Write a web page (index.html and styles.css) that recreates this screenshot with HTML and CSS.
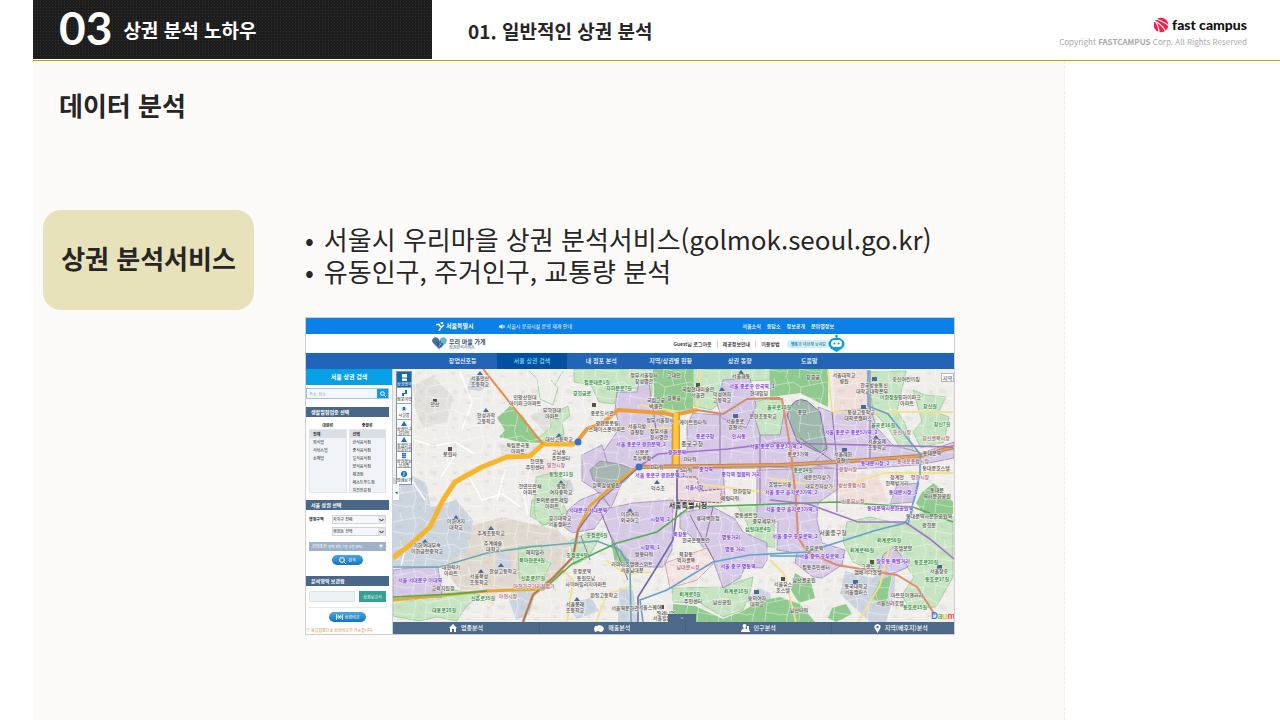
FILE: index.html
```html
<!DOCTYPE html>
<html lang="ko">
<head>
  <meta charset="UTF-8" />
  <meta name="viewport" content="width=device-width, initial-scale=1.0"/>
  <title>상권 분석 노하우 - 데이터 분석</title>
  <link rel="stylesheet" href="styles.css">
</head>
<body>
  <header class="header">
    <div class="chapter">
      <span class="chapter-num">03</span>
      <span class="chapter-name">상권 분석 노하우</span>
    </div>
    <h1>01. 일반적인 상권 분석</h1>
    <div class="brand">
      <div class="logo">
        <svg width="16" height="16" viewBox="0 0 16 16">
          <circle cx="8" cy="8" r="7.300" fill="#f4214b"/>
          <path d="M1 2 Q9 3 16 9 M1 4 Q9 7 13 15 M2 4 Q6 9 6 16" stroke="#fff" stroke-width="1.200" fill="none"/>
        </svg>
        <span>fast campus</span>
      </div>
      <p>Copyright <b>FASTCAMPUS</b> Corp. All Rights Reserved</p>
    </div>
  </header>

  <main class="slide">
    <h2>데이터 분석</h2>
    <div class="content">
      <div class="topic">상권 분석서비스</div>
      <div class="detail">
        <ul class="points">
          <li>서울시 우리마을 상권 분석서비스(golmok.seoul.go.kr)</li>
          <li>유동인구, 주거인구, 교통량 분석</li>
        </ul>

        <div class="site">
          <!-- Top bar -->
          <div class="site-top">
            <div class="city">
              <svg width="9" height="9" viewBox="0 0 9 9" fill="none" stroke="#fff" stroke-width="1.5"><path d="M0 3 Q3 1 4 4 Q5 6 8 3 M3 9 Q4 6 7 4"/><circle cx="6" cy="1" r=".6"/></svg>
              서울특별시
            </div>
            <div class="notice">
              <svg width="6" height="5" viewBox="0 0 6 5" fill="#fff"><path d="M0 1.5h1.5L3.5 0v5L1.5 3.5H0z"/><path d="M4.5 1v3M5.6 1v3" stroke="#fff" stroke-width=".5"/></svg>
              서울시 문화시설 운영 재개 안내
            </div>
            <nav class="top-links">
              <a href="#">서울소식</a><a href="#">응답소</a><a href="#">정보공개</a><a href="#">분야별정보</a>
            </nav>
          </div>

          <!-- Logo row -->
          <div class="site-head">
            <div class="shop-logo">
              <svg width="15" height="13" viewBox="0 0 15 13">
                <path d="M7.500 12.500 L1 6 Q-1 3 1.500 1 Q5-1 7.500 3z" fill="#47719f"/>
                <path d="M7.500 12.500 L14 6 Q16 3 13.500 1 Q10-1 7.500 3z" fill="#6bb6cf"/>
                <path d="M4 5l6 5M6 4l5 4M5 9l4-5M7 11l4-5" stroke="#24446f" stroke-width=".8"/>
              </svg>
              <div><strong>우리 마을 가게</strong><small>상권분석서비스</small></div>
            </div>
            <nav class="head-links">
              <a href="#">Guest님 로그아웃</a><a href="#">제공정보안내</a><a href="#">이용방법</a>
            </nav>
            <div class="chatbot">
              <span><b>챗봇</b>과 대화해 보세요</span>
              <svg width="17" height="19" viewBox="0 0 17 19">
                <path d="M8.500 1v4" stroke="#0aa0d4"/><circle cx="8.500" cy="2" r="1.300" fill="#0aa0d4"/>
                <path d="M5 16h7l-3.500 2z" fill="#0aa0d4"/>
                <ellipse cx="8.500" cy="10" rx="8" ry="6.500" fill="#0aa0d4"/>
                <rect x="3" y="6" width="11" height="7" rx="3.500" fill="#fff"/>
                <circle cx="6.500" cy="9.500" r="1" fill="#0aa0d4"/><circle cx="10.500" cy="9.500" r="1" fill="#0aa0d4"/>
              </svg>
            </div>
          </div>

          <nav class="site-nav">
            <a href="#">창업신호등</a>
            <a href="#" class="active">서울 상권 검색</a>
            <a href="#">내 점포 분석</a>
            <a href="#">지역/상권별 현황</a>
            <a href="#">상권 동향</a>
            <a href="#">도움말</a>
          </nav>

          <div class="site-body">
            <!-- Search panel -->
            <aside class="panel">
              <h3 class="panel-title">서울 상권 검색</h3>
              <div class="search">
                <input type="text" aria-label="주소, 장소" placeholder="주소, 장소">
                <button aria-label="검색"><svg width="6" height="6" viewBox="0 0 6 6" fill="none" stroke="#fff"><circle cx="2.500" cy="2.500" r="1.800"/><path d="M4 4l2 2"/></svg></button>
              </div>

              <h4>생활밀접업종 선택</h4>
              <div class="types">
                <div>
                  <b>대분류</b>
                  <ul><li class="on">전체</li><li>외식업</li><li>서비스업</li><li>소매업</li></ul>
                </div>
                <div>
                  <b>중분류</b>
                  <ul><li class="on">선택</li><li>한식음식점</li><li>중식음식점</li><li>일식음식점</li><li>양식음식점</li><li>제과점</li><li>패스트푸드점</li><li>치킨전문점</li></ul>
                </div>
              </div>

              <h4>서울 상권 선택</h4>
              <div class="area">
                <label for="gu">행정구역</label>
                <div class="drop"><select id="gu"><option>자치구 전체</option></select><svg width="7" height="8" viewBox="0 0 7 8"><path d="M1.500 3l2 2 2-2" fill="none" stroke="#222"/></svg></div>
                <div class="drop"><select id="dong" aria-label="행정동"><option>행정동 선택</option></select><svg width="7" height="8" viewBox="0 0 7 8"><path d="M1.500 3l2 2 2-2" fill="none" stroke="#222"/></svg></div>
              </div>
              <button class="option"><span>선택조건 <small>(선택 영역, 기준 상권 30%)</small></span><span>▼</span></button>
              <button class="pill find"><svg width="7" height="7" viewBox="0 0 7 7" fill="none" stroke="#fff"><circle cx="3" cy="3" r="2.400"/><path d="M5 5l2 2"/></svg>검색</button>

              <h4>분석영역 보관함</h4>
              <div class="saved">
                <input type="text" aria-label="보관함">
                <button>상권보고서</button>
              </div>
              <button class="pill compare"><svg width="7" height="6" viewBox="0 0 7 6" fill="none" stroke="#fff" stroke-width=".8"><path d="M.5 0v6M6.500 0v6M2 1l3 4M5 1l-3 4M1 3h5"/></svg>상권비교</button>
              <p class="note">※ 동일업종으로 상권비교가 가능합니다.</p>
            </aside>

            <div class="map-col">
              <div class="map">
                <svg class="map-svg" viewBox="393 369 561 253" preserveAspectRatio="xMidYMid slice">
                  <defs>
                    <pattern id="streets" width="34" height="27" patternUnits="userSpaceOnUse">
                      <path d="M0 6l11-2 8 5 15-3M5 0l3 11-4 16M19 9l-2 18M17 18l17 3M26 0l2 8M0 20l6 1" fill="none" stroke="#fff" stroke-width="1" opacity=".4"/>
                      <path d="M11 12h4v4h-4zM22 11l7 1-1 4-6-1zM9 21h4v3H9zM24 24h5v2h-5z" fill="#b9b4a9" opacity=".16"/>
                    </pattern>
                  </defs>
                  <path fill="#efeeea" d="M393 369h561v253H393z"/>

                  <!-- Built-up and campus ground -->
                  <g fill="#e2e0dd">
                    <path d="M413 385l20-9 20 21-6 25-24 6-8-20z"/>
                    <path d="M500 445l42 2-12 10-28 4zM530 416l17-10 15 10-4 14-10 6z"/>
                  </g>
                  <path fill="#e0d9cf" d="M467 527l36-10 54 13 14 12-8 28-20 19-83 1-18-24z"/>
                  <g fill="#ccd5df">
                    <path d="M393 475l18 0 15 8 5 24 25-7 17 20-5 30-26 16-49 1z"/>
                    <path d="M497 553l14 3v18l-15-2zM513 587l22 5-5 22-14 6-7-20zM470 378l11-4 8 10-9 7-13-2z"/>
                    <path d="M547 432l14-2 6 10-18 3zM546 487l24-8 4 12-14 12zM566 605l25-8 8 14-22 8z"/>
                    <path d="M866 383l22-3v30l-23-3zM845 571l28 7 23-18-2 36-8 26-16 0-30-28zM727 387l13-4v14l-13 2z"/>
                    <path d="M619 588l14 2 5 32h-20zM746 600l12-12 12 5 2 15-15 3z"/>
                  </g>
                  <path fill="#efdeda" d="M833 369h35v40l-34 2zM838 472l40 3 10 27-48 1zM541 458l18 4-3 15-18-3zM480 585l18 4-4 17-15-10z"/>
                  <path d="M395 590l10-40M415 440l18 6 22-4 20 12M455 455l-14 22M460 372l12 30-10 28M425 500l-12-18-20-6M470 478l12 22 20-6 20 14M505 470l-8 30M520 480l8 35" fill="none" stroke="#fff" stroke-width="1.500"/>

                  <!-- Neighbourhood parks -->
                  <g fill="#c7e5c3" stroke="#84bc83" stroke-width=".6">
                    <path d="M574 369h78v27l-17-8-17 2-4 14-15-2-8-17-17-3zM693 369h77v11l-46 2 5 14-18 14-17-4z"/>
                    <path d="M550 415l18-9 2 10-8 6 2 12-19 8-8-3 14-12z"/>
                    <path d="M529 371l8 8 3 20 13 6 5-17-7-8M563 371l-8 14" fill="none"/>
                    <path d="M753 402l24-5 17 20 2 25-25 6-14-8z"/>
                    <path d="M868 372l38-1-5 23-4 17 8 12 10 34-12-5-15-24-15-17z"/>
                    <path d="M913 390l12 5 21 2-8 16 11 4-5 25-23 6-8-16 9-11z"/>
                    <path d="M536 477l20-5 12 12-8 12 7 16-25 14-8-13zM518 547l24-2v14l9 4-7 14-25 1zM532 500l24 2 7 15-18 8-15-9z"/>
                    <path d="M393 598l20 3 18-11 24 0 25 5-14 12-9 14-20-4-18 4-26-5zM570 541l16-8 17-1-15 26-14 7z"/>
                    <path d="M672 588l51-1 30-10-3 16-7 17-20 7-23-14-27-1z"/>
                    <path d="M737 505l36 1 2 42-23-5-5-20zM847 522l23-5 35 8 15-12 33 4v60l-17 30-27 2-7-14 12-18-17-25-6 14-20 4-18-8-10-20z"/>
                    <path d="M786 470l24-7 5 24-10 12-18-8z"/>
                  </g>

                  <!-- Hills and palaces -->
                  <g fill="#8fca8e">
                    <path d="M510 406l-13 12 8 12-6 7 21 5 22 1-20-28z"/>
                    <path d="M653 369h40v41l-35 2-4-12zM770 369h58v38l-28-14-30 4zM611 541l12 8 10 19-18-5z"/>
                    <path d="M673 604l22 2 28 13 20-8 16-10 21-4 20 7 15 18H673zM795 573l16 9 4 16-16 5-8-13zM880 580l12-5-6 30-15-7zM832 608l14-4 6 10-16 8-8-4z"/>
                    <path d="M922 492l12-9 19 19v12l-28 1-9-12zM913 450l12 4-4 8-12-4z"/>
                  </g>

                  <!-- Selected trade areas -->
                  <g fill="#d3c5e6" fill-opacity=".88" stroke="#957fb4" stroke-width=".7">
                    <path d="M617 392l20 0 2-10 10 0 4 30 19 8v45h-34l-15 10-28-12 15-21 10-15-5-17z"/>
                    <path d="M687 425l6-12 27 2 30-13 10 33h20l5-27h7l11 30 14 7 10 2v20l-147 2-2-15 9-1z"/>
                    <path d="M723 380l27-2 6 28-10 22-24-10-5-14z"/>
                    <path d="M818 407l14 5 38-4 7 20 16 17 29 8 32-11v16l-35 7-82 5-25-6 15-14z"/>
                    <path d="M600 510l33-7 40-3-1 50-9 17h-26l-17-14-12-23zM678 468h45l2 32-48 2z"/>
                    <path d="M680 513l33-6 22 12 8 13 24 11 0 17-5 8-17-1-5 11-17 10-10-28-13-17-20-15z"/>
                    <path d="M757 470l80-2 1 21-20 14-1 17 5 23 23 7-3 15-20 13-9-1-18-14 2-10-20-3 1-28-21-5z"/>
                    <path d="M893 547l7 7 8 13-18 8-12-3 5-17zM897 485l22-2-5 19-24 2z"/>
                    <path d="M393 570l17-2 28-1 4 30-49 2zM568 510l12-10 20-8 10 15-16 22-22 4-10-8zM582 455l20-10 5 17 16 18-12 28-15-18-14-9z"/>
                  </g>
                  <path d="M665 563l42-15 8 14-18 18-27 8z" fill="#f6e4e3" stroke="#c48c98" stroke-width=".7"/>
                  <path d="M787 415q6-20 20-14l13 11 7 36-7 5-23-12z" fill="#9fb9ad" stroke="#83709d" stroke-width="1"/>
                  <path d="M590 470l10-9 19 3 17 6-12 12-13 5-18-7z" fill="#a6b6b0" stroke="#83709d" stroke-width=".6"/>
                  <path d="M677 477l20 0 2 14 22-2v14l-44-3z" fill="#e9dbe0" stroke="#a8503c" stroke-dasharray="3 1"/>
                  <path fill="url(#streets)" d="M393 369h561v253H393z"/>

                  <!-- Small roads -->
                  <g fill="none" stroke="#f4e092" stroke-width="1.800">
                    <path d="M596 622l11-28 26-8M606 560l20 14 25-2M563 570l10 10-6 42M770 560l14 14 12 48M640 405l40 7M674 428h-62M697 410l4-40M828 370l4 42 121 0M770 479l65 9 50-15h68M890 545l-10 40-22 37M700 484l70 9"/>
                  </g>
                  <g fill="none" stroke="#8e719f" stroke-width="1">
                    <path d="M720 415v50M760 435v70M832 412l5 50 0 50M870 370v94M590 560l-9-24M713 507l-8 34M600 510l28 70M690 515l25 47M800 438l37 26M652 400l4 30"/>
                  </g>

                  <!-- Main roads -->
                  <g fill="none" stroke-linejoin="round">
                    <path d="M575 444L587 429 603 423 618 410 663 413 673 415 697 410" stroke="#ee9d3c" stroke-width="4"/>
                    <path d="M697 410L723 414 747 399 780 398" stroke="#cf8b66" stroke-width="2"/>
                    <path d="M393 558l17-13 20-18 13-27 12-18 27-15 25-10 23-1 13-12h32" stroke="#f7b52b" stroke-width="5"/>
                    <path d="M676 413v55" stroke="#e49a1d" stroke-width="8"/><path d="M676 413v55" stroke="#ffc947" stroke-width="5"/>
                    <path d="M638 467l142-2 57-3 83-6 34-9" stroke="#ba8060" stroke-width="4"/><path d="M638 467l142-2 57-3 83-6 34-9" stroke="#e2a75d" stroke-width="2"/>
                    <path d="M638 467l-28 21-20 18-12 24-5 27-20 21-20 17-10 27M393 600l94-9 56-2 20-19" stroke="#e5a82c" stroke-width="3"/>
                    <path d="M523 622l10-27 20-17 20-21 5-27 22-30 38-32" stroke="#9673a6" stroke-width="1.500"/>
                    <path d="M483 369l39 49 21 26" stroke="#ee8a43" stroke-width="2"/>
                    <path d="M770 399l12 0 9 53 5 48 2 37 9 15 30 13 60 10 20 12 18 28" stroke="#e28a69" stroke-width="2"/>
                  </g>

                  <!-- Subway lines -->
                  <g fill="none" stroke-width="1.600">
                    <path d="M393 567h47l47-14 43-6 67-6 23 9 10 17 1 55" stroke="#67a7ba"/>
                    <path d="M643 622l-3-22 27-10 46-28 37-7 57-3 70-22 28-7 8-13M770 556h37M868 370v36l20 8 32 40v20l-12 50" stroke="#62a2cf"/>
                    <path d="M677 470v37l-4 33-15 25-20 32v25" stroke="#7466a6"/>
                    <path d="M543 590l29-26 45-21 40-11 33-25 147-5 76 5 40 15" stroke="#53ad55"/>
                    <path d="M638 467l20-13 70-5 47-6 178 4M770 500l38 4 50 18 47 0 25 17 24 20" stroke="#a472cb"/>
                    <path d="M393 597l60-3 34-3" stroke="#4cab54"/>
                  </g>
                  <g fill="#3872ca"><circle cx="578" cy="442" r="3.500"/><circle cx="639" cy="467" r="3.500"/></g>

                  <!-- Place pins -->
                  <g fill="#486b92">
                    <path d="M480 371l3 4h-6zM486 408l3 4h-6zM559 433l3 4h-6zM561 480l3 4h-6zM491 526l3 4h-6zM501 563l3 4h-6zM481 569l3 4h-6zM456 515l3 4h-6zM425 539l3 4h-6zM577 597l3 4h-6zM657 480l3 4h-6zM741 370l3 4h-6zM722 387l3 4h-6zM876 435l3 4h-6zM630 508l3 4h-6z"/>
                    <path d="M872 377h5v4h-5zM861 405h5v4h-5zM754 590h5v4h-5zM853 580h5v4h-5zM733 414h5v4h-5zM842 448h5v4h-5zM937 565h5v4h-5z"/>
                  </g>
                  <g fill="#554">
                    <path d="M433 399h4v3h-4zM448 447h4v4h-4zM592 403h4v4h-4zM696 383h4v4h-4zM781 577h4v4h-4zM870 560h4v4h-4zM660 605h4v4h-4z"/>
                  </g>

                  <g class="place">
                    <text x="480" y="380">서울안산</text><text x="480" y="386">초등학교</text><text x="435" y="406">안산</text><text x="486" y="417">한성과학</text><text x="486" y="423">고등학교</text>
                    <text x="525" y="399">인왕산현대</text><text x="525" y="405">아이파크아파트</text><text x="552" y="412">무악현대</text><text x="552" y="418">아파트</text><text x="450" y="456">봉원사</text>
                    <text x="518" y="447">독립문극동</text><text x="518" y="453">아파트</text><text x="559" y="441">대신고등학교</text><text x="559" y="454">교남동</text><text x="561" y="460">주민센터</text><text x="537" y="463">천연동</text><text x="535" y="469">주민센터</text>
                    <text x="530" y="488">천연뜨란채</text><text x="530" y="494">아파트</text><text x="561" y="488">동명</text><text x="561" y="494">여자중학교</text><text x="456" y="523">이화여자</text><text x="456" y="529">대학교</text><text x="427" y="547">이화여대부속</text><text x="427" y="553">이화금란중학교</text>
                    <text x="491" y="535">추계초등학교</text><text x="493" y="545">추계예술</text><text x="493" y="551">대학교</text><text x="503" y="573">한성고등학교</text><text x="479" y="578">서울북성</text><text x="479" y="584">초등학교</text><text x="451" y="569">대현럭키</text><text x="451" y="575">아파트</text><text x="443" y="590">교육지원청</text><text x="552" y="502">돈의문센트레빌</text><text x="552" y="508">아파트</text><text x="560" y="520">경기대학교</text><text x="560" y="526">서울캠퍼스</text>
                    <text x="535" y="554">해피빌라</text><text x="582" y="573">충정로역</text><text x="586" y="580">동원모닝</text><text x="586" y="586">사이버빌리지아파트</text><text x="575" y="606">서울봉래</text><text x="575" y="612">초등학교</text><text x="604" y="597">환일고등학교</text>
                    <text x="644" y="377">정부서울청사</text><text x="644" y="383">창성별관</text><text x="674" y="377">고대안</text><text x="674" y="400">경복궁</text><text x="656" y="402">국립고궁</text><text x="656" y="408">박물관</text><text x="698" y="391">국립현대미술관</text><text x="698" y="397">서울관</text><text x="722" y="396">덕성여자</text><text x="722" y="402">고등학교</text><text x="741" y="378">서울재동</text><text x="759" y="395">현대빌딩</text>
                    <text x="602" y="415">종로도서관</text><text x="607" y="425">광화문풍림</text><text x="607" y="431">스페이스본아파트</text><text x="660" y="422">정부서울청사</text><text x="659" y="433">정부서울</text><text x="659" y="439">청사별관</text><text x="637" y="428">서울지방</text><text x="637" y="434">경찰청</text><text x="693" y="424">케이트윈타워</text><text x="735" y="423">서울종로</text><text x="735" y="429">경찰서</text><text x="763" y="418">운현초등학교</text>
                    <text x="642" y="454">신문로</text><text x="642" y="460">주상복합</text><text x="692" y="446" class="mid">종로구청</text><text x="690" y="461">D타워</text><text x="657" y="469">D타워</text><text x="686" y="472">S타워</text><text x="658" y="490">덕수초</text><text x="606" y="487">강북삼성병원</text><text x="742" y="493">한화빌딩</text><text x="730" y="500">페럼타워</text><text x="780" y="486">호텔뉴서울</text>
                    <text x="813" y="379">창경궁</text><text x="844" y="377">서울대학교</text><text x="844" y="383">병원</text><text x="874" y="387">한국방송통신</text><text x="872" y="393">대학교대학본부</text><text x="906" y="381">충신어린이집</text><text x="907" y="399">쇼핑하이파크</text><text x="907" y="405">아파트</text><text x="861" y="414">동성고등학교</text><text x="858" y="420">대학로캠퍼스</text><text x="802" y="414">종묘</text><text x="798" y="456">종로3가역</text><text x="843" y="456">서울혜화</text><text x="843" y="462">경찰서</text><text x="877" y="443">서울효제</text><text x="877" y="449">초등학교</text><text x="932" y="455">동대문역</text><text x="936" y="470">동대문호스텔</text><text x="817" y="479">세운전자상가</text><text x="819" y="488">대우전자상가</text><text x="897" y="479">청계천</text><text x="897" y="485">헌책방거리</text><text x="937" y="492">동대문</text><text x="937" y="498">역사문화공원</text><text x="929" y="527">광희문</text><text x="929" y="518">동대문역사문화공원역</text>
                    <text x="630" y="516">이화여자</text><text x="630" y="522">외국어고</text><text x="696" y="542">한국은행본관</text><text x="708" y="520">롯데백화점</text><text x="686" y="556">북창동</text><text x="686" y="562">먹자골목</text><text x="644" y="556">쌍용타워</text><text x="632" y="566">라마다호텔앤스위트</text><text x="632" y="572">서울남대문</text><text x="650" y="609">서울스퀘어</text><text x="666" y="615">밀레니엄</text><text x="662" y="620">서울힐튼</text><text x="625" y="610">서울역문화관</text><text x="693" y="603">주민센터</text><text x="722" y="604">남산공원</text><text x="757" y="600">숭의여자</text><text x="757" y="606">대학교</text><text x="746" y="517">명동센트럴</text><text x="764" y="523">중부세무서</text>
                    <text x="783" y="586">서울유스</text><text x="783" y="592">호스텔</text><text x="816" y="569">필동주민센터</text><text x="814" y="550">충무로역</text><text x="868" y="568">그랜드</text><text x="868" y="574">앰배서더호텔</text><text x="856" y="588">동국대학교</text><text x="856" y="594">서울캠퍼스</text><text x="903" y="550">호텔로얄</text><text x="907" y="597">아트모아갤러리</text><text x="890" y="605">서울신라호텔</text><text x="804" y="582">남산골공원</text><text x="799" y="612">남산타워</text><text x="939" y="573">서울장충</text><text x="833" y="535" class="mid">서울중구청</text>
                    <text x="688" y="508" class="big">서울특별시청</text>
                  </g>
                  <g class="place trade">
                    <text x="641" y="446">서울 종로구 광화문역_2</text><text x="660" y="477">서울 종로구 광화문역_1</text><text x="752" y="388">서울 종로구 안국역_1</text><text x="705" y="438">종로구청</text><text x="739" y="438">인사동</text><text x="776" y="448">서울 종로구 종로3가역_2</text><text x="677" y="454">광화문역</text><text x="706" y="471">종각역</text><text x="741" y="476">종각역 젊음의 거리</text><text x="694" y="489">서울시청</text><text x="851" y="434">서울 종로구 종로5가역_2</text><text x="875" y="465">동대문시장_2</text><text x="791" y="494">서울 중구 을지로3가역_2</text><text x="903" y="494">동대문시장_1</text>
                    <text x="588" y="512">서대문구 서대문역</text><text x="420" y="582">서울 서대문구 이대역</text><text x="660" y="521">시청역_2</text><text x="650" y="549">시청역_1</text><text x="680" y="536">북창동</text><text x="731" y="539">명동거리</text><text x="735" y="551">명동 거리</text><text x="738" y="568">서울 중구 명동역</text><text x="792" y="511">서울 중구 을지로3가역_1</text><text x="795" y="538">서울 중구 충무로역_2</text><text x="822" y="558">서울 중구 충무로역_1</text><text x="890" y="510">동대문역사문화공원역</text><text x="893" y="563">장충동 족발거리</text>
                  </g>
                  <g class="place road">
                    <text x="619" y="390">자하문로7길</text><text x="597" y="384">필운대로1길</text><text x="582" y="395">경희궁로</text><text x="779" y="409">율곡로10길</text><text x="889" y="399" class="short">이화장길</text><text x="883" y="427">율곡로16길</text><text x="930" y="408">창신길</text><text x="942" y="426">창신7길</text><text x="803" y="472">종로24길</text><text x="561" y="476">통일로11길</text><text x="532" y="562">북아현로4길</text><text x="533" y="580">신촌로37길</text><text x="577" y="557">충정로4길</text><text x="597" y="537">충정로6길</text><text x="483" y="600">신촌로35길</text><text x="444" y="612">대흥로28길</text><text x="690" y="596">퇴계로8길</text><text x="736" y="593">퇴계로18길</text><text x="889" y="542">퇴계로56길</text><text x="862" y="552">퇴계로46길</text><text x="926" y="564">동호로20길</text><text x="937" y="581">동호로17길</text><text x="915" y="609">동호로15길</text><text x="758" y="531">삼일대로4길</text>
                  </g>
                  <g class="place pinkish">
                    <text x="556" y="467">영천시장</text><text x="534" y="588">아현가구거리상점가</text><text x="508" y="598">아현시장</text><text x="688" y="569">남대문시장</text><text x="902" y="434">충신시장</text><text x="936" y="440">창신골목시장</text><text x="848" y="471">광장시장</text><text x="920" y="479">평화시장</text><text x="852" y="487">방산종합시장</text><text x="853" y="503">신중부시장</text><text x="913" y="463">동대문종합시장</text>
                  </g>
                  <g class="portal"><text x="931" y="619"><tspan fill="#3478e5">D</tspan><tspan fill="#54b84c">a</tspan><tspan fill="#f4bd2b">u</tspan><tspan fill="#f24852">m</tspan></text></g>
                </svg>

                <div class="tools">
                  <button class="active"><svg width="7" height="7" viewBox="0 0 7 7"><path d="M1 0h5v7H1z" fill="#fff"/><path d="M1 4h5" stroke="#1666b8"/></svg>상권영역</button>
                  <button><svg width="6" height="6" viewBox="0 0 6 6"><path d="M1 6V3h3V0h2v4H3v2z"/></svg>점포이력</button>
                  <button><svg width="6" height="6" viewBox="0 0 6 6"><circle cx="3" cy="3" r="2.500" fill="#a9ccea"/><path d="M2 1h2v3H2z"/></svg>시설물</button>
                  <button><svg width="6" height="5" viewBox="0 0 6 5"><path d="M0 5l3-5 3 5z"/></svg>상권인구<br>길단위</button>
                  <button><svg width="6" height="5" viewBox="0 0 6 5"><path d="M0 5l3-5 3 5z"/></svg>상권인구<br>건물단위</button>
                  <button><svg width="6" height="5" viewBox="0 0 6 5"><path d="M1 0h4v5H1z"/><path d="M0 1.500h6M0 3.500h6" stroke="#fff" stroke-width=".5"/></svg>상권정보<br>브리핑</button>
                  <button><svg width="6" height="6" viewBox="0 0 6 6"><circle cx="3" cy="3" r="3"/><path d="M3 1v2.500L2 5" stroke="#fff" fill="none" stroke-width=".8"/></svg>범례보기</button>
                </div>
                <button class="fold" aria-label="접기">◂</button>
                <button class="corner">지역</button>
                <button class="handle">=</button>
              </div>

              <nav class="map-nav">
                <a href="#"><svg width="8" height="8" viewBox="0 0 8 8"><path d="M4 0L0 4h1v4h2V5h2v3h2V4h1z"/></svg>업종분석</a>
                <a href="#"><svg width="10" height="8" viewBox="0 0 10 8"><path d="M1 2l2 0 2-1 3 1 2 2-1 3-2 1-3-1-3 1-1-3z"/></svg>매출분석</a>
                <a href="#"><svg width="9" height="8" viewBox="0 0 9 8"><circle cx="3.500" cy="2" r="2"/><path d="M0 8q0-3 3.500-4L6 5V2h2v3l1 3z"/></svg>인구분석</a>
                <a href="#"><svg width="7" height="9" viewBox="0 0 7 9"><path d="M3.500 9L1 5Q-1 1 3.500 0 8 1 6 5z"/><circle cx="3.500" cy="3" r="1.200" fill="#4c698a"/></svg>지역(배후지)분석</a>
              </nav>
            </div>
          </div>
        </div>
      </div>
    </div>
  </main>
</body>
</html>
```
FILE: styles.css
```css
* { box-sizing: border-box; margin: 0; padding: 0; }
body {
  background: #fff;
  color: #262626;
  font-family: "Noto Sans CJK KR", sans-serif;
  padding-left: 33px;
  min-height: 100vh;
  display: flex;
  flex-direction: column;
}
a { color: inherit; text-decoration: none; }
button, input, select { font: inherit; color: inherit; border: none; border-radius: 0; min-width: 0; }
button { cursor: pointer; }
ul { list-style: none; }
svg { flex: none; }

/* Slide header */
.header {
  height: 61px;
  display: flex;
  align-items: center;
  border-bottom: 1px solid #b7a500;
}
.chapter {
  align-self: flex-start;
  width: 32%;
  height: 59px;
  padding-left: 26px;
  display: flex;
  align-items: center;
  gap: 11px;
  color: #fff;
  background: radial-gradient(#303030 1px, #1d1d1d 1px) 0 0 / 3px 3px;
}
.chapter-num { font-family: Lato, sans-serif; font-size: 46px; line-height: 56px; font-weight: bold; padding-bottom: 4px; }
.chapter-name { font-size: 19px; font-weight: bold; }
h1 { font-size: 19px; margin-left: 36px; }
.brand { margin-left: auto; margin-right: 33px; padding-top: 8px; text-align: right; }
.logo { display: flex; justify-content: flex-end; align-items: center; gap: 3px; color: #111; font: 900 14px/16px Lato, sans-serif; }
.brand p { font-size: 8px; line-height: 18px; color: #aaa; }

.slide {
  flex: 1;
  margin-right: 215px;
  padding: 24px 0 64px 10px;
  background: #fdfbf9;
  border-right: 1px dashed #eee;
}
h2 { font-size: 26px; line-height: 40px; margin-left: 16px; }
.content { display: flex; gap: 51px; margin-top: 85px; }
.topic {
  width: 211px;
  height: 100px;
  padding-bottom: 6px;
  border-radius: 18px;
  background: #e8e2bb;
  display: flex;
  align-items: center;
  justify-content: center;
  font-size: 26px;
  font-weight: bold;
}
.detail { flex: 1; padding-top: 13px; margin-right: 109px; }
.points { font-size: 26px; line-height: 32px; margin-bottom: 30px; }
.points li { display: flex; gap: 10px; }
.points li::before { content: "•"; }

/* Embedded site */
.site { border: 1px solid #cfcfcf; background: #fff; font-size: 5px; line-height: 8px; }
.site-top {
  height: 16px;
  padding: 0 120px 0 130px;
  display: flex;
  align-items: center;
  background: #0b80e8;
  color: #fff;
}
.city { display: flex; align-items: center; gap: 1px; font-size: 6px; font-weight: bold; }
.notice { display: flex; align-items: center; gap: 2px; margin-left: 25px; }
.top-links { margin-left: auto; display: flex; gap: 6px; font-weight: 500; }

.site-head { height: 19px; padding: 0 109px 0 126px; display: flex; align-items: center; }
.shop-logo { display: flex; align-items: center; gap: 2px; color: #304f78; }
.shop-logo strong, .shop-logo small { display: block; line-height: 7px; }
.shop-logo strong { font-size: 6px; }
.shop-logo small { font-size: 4px; line-height: 5px; }
.head-links { margin-left: auto; display: flex; font-weight: 500; }
.head-links a + a { border-left: 1px solid #ddd; margin-left: 5px; padding-left: 5px; }
.chatbot { display: flex; align-items: center; margin-left: 7px; font-size: 4px; color: #375a78; }
.chatbot span { background: #cff1fa; border-radius: 4px; padding: 0 3px 0 4px; margin-right: -1px; }
.chatbot b { color: #0785c8; }

.site-nav {
  height: 16px;
  padding: 0 110px 0 122px;
  display: flex;
  background: #2265b6;
  color: #fff;
  font-size: 6px;
  font-weight: 500;
}
.site-nav a { flex: 1; line-height: 16px; text-align: center; white-space: nowrap; }
.site-nav .active { background: #0450a0; color: #77ddfc; }
.site-body { display: flex; }

/* Left panel */
.panel { width: 87px; height: 265px; padding-right: 3px; border-right: 1px solid #ccd3dc; font-size: 4px; line-height: 8px; display: flex; flex-direction: column; }
.panel-title { height: 16px; margin-right: -3px; background: #05a0e6; color: #fff; font-size: 6px; line-height: 16px; text-align: center; }
.search { display: flex; margin: 3px 0 8px; height: 11px; border: 1px solid #9cc6e8; }
.search input { flex: 1; padding: 0 2px; background: #f4f8fc; }
.search input::placeholder { color: #aab; }
.search button { width: 11px; display: grid; place-items: center; background: #119be0; }
.panel h4 { height: 10px; padding-left: 5px; background: #486789; color: #fff; font-size: 5px; line-height: 10px; }
.types { display: flex; gap: 2px; padding: 4px 3px 7px; }
.types > div { flex: 1; }
.types b { display: block; text-align: center; }
.types ul { height: 64px; overflow: hidden; background: #f0f4f8; border: 1px solid #e3e7ec; }
.types li { padding-left: 3px; }
.types .on { background: #d9dfe5; font-weight: bold; }
.area { display: grid; grid-template-columns: 21px 1fr; gap: 3px 2px; padding: 5px 3px 6px; }
.area label { font-weight: bold; line-height: 9px; }
.area .drop:last-child { grid-column: 2; }
.drop { display: grid; height: 9px; border: 1px solid #ccd4dd; background: #f5f7fa; }
.drop select, .drop svg { grid-area: 1 / 1; }
.drop svg { justify-self: end; background: #e4e4e4; pointer-events: none; }
.drop select { appearance: none; background: none; line-height: 7px; height: 7px; }
.option { display: flex; justify-content: space-between; margin: 0 3px 4px; padding: 0 3px; height: 9px; background: #9eb2c9; color: #fff; line-height: 9px; }
.option small { font-size: 3px; }
.pill { align-self: center; display: flex; align-items: center; gap: 2px; height: 10px; padding: 0 7px; border-radius: 5px; background: linear-gradient(#4ba6e4, #1674be); color: #fff; }
.find { margin-bottom: 11px; }
.saved { display: flex; justify-content: space-between; margin: 5px 3px 3px; padding-bottom: 5px; border-bottom: 1px solid #e5e9ee; height: 17px; }
.saved input { width: 46px; background: #edf2f7; border: 1px solid #dce3ea; }
.saved button { width: 27px; background: #36a095; color: #fff; }
.compare { margin-top: 1px; }
.note { margin-top: auto; color: #d68b35; white-space: nowrap; line-height: 7px; }

/* Map */
.map-col { flex: 1; min-width: 0; display: flex; flex-direction: column; }
.map { position: relative; flex: 1; overflow: hidden; }
.map-svg { display: block; width: 100%; height: 253px; }
.place text { font-size: 5px; font-weight: 500; text-anchor: middle; fill: #5c5450; stroke: #fff; stroke-width: 1px; stroke-opacity: .7; paint-order: stroke; }
.place .mid { font-size: 6px; }
.place .big { font-size: 7px; font-weight: bold; fill: #333; }
.trade text { fill: #7326dc; }
.road text { fill: #16812d; }
.pinkish text { fill: #ab6578; }
.portal { font: bold 9px Lato, sans-serif; }
.tools { position: absolute; left: 3px; top: 2px; width: 16px; border: 1px solid #8092a5; background: #fff; }
.tools button {
  width: 100%;
  height: 16px;
  display: block;
  background: #fff;
  border-bottom: 1px solid #9aa8b6;
  font-size: 4px;
  line-height: 4px;
  text-align: center;
  white-space: nowrap;
  color: #222;
}
.tools button:last-child { border-bottom: none; }
.tools svg { display: block; margin: 0 auto 1px; fill: #1772c9; }
.tools .active { background: #1666b8; color: #fff; }
.fold { position: absolute; left: 0; top: 115px; width: 6px; height: 16px; background: #fff; color: #246; line-height: 16px; }
.corner { position: absolute; right: 0; top: 4px; padding: 0 1px; border: 1px solid #bbb; background: #fff; line-height: 7px; }
.handle { position: absolute; left: 275px; bottom: 0; width: 28px; height: 8px; background: #4c698a; color: #fff; }
.map-nav { height: 12px; display: flex; background: #4c698a; color: #fff; font-size: 6px; font-weight: 500; }
.map-nav a { flex: 0 0 26%; display: flex; align-items: center; justify-content: center; gap: 4px; }
.map-nav a + a { border-left: 1px solid #43607f; }
.map-nav a:last-child { flex: 1; padding-left: 16px; }
.map-nav svg { fill: #fff; }
```
